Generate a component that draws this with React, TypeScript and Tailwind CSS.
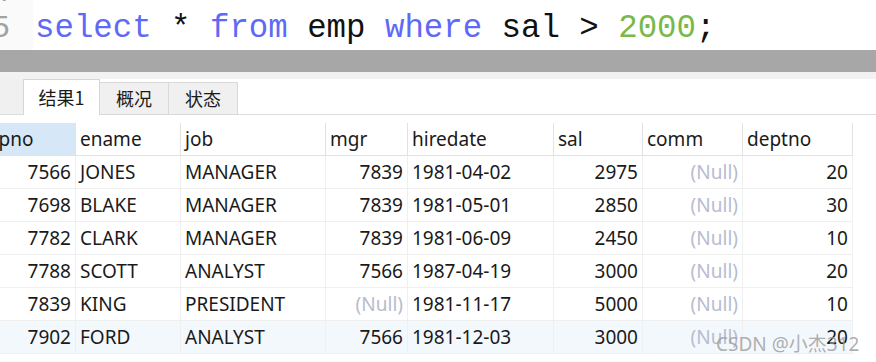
import React from 'react'

// Query result view: SQL editor line on top, result tabs, data grid below

type Align = 'l' | 'r'

const columns: { name: string; align: Align }[] = [
  { name: 'empno', align: 'r' },
  { name: 'ename', align: 'l' },
  { name: 'job', align: 'l' },
  { name: 'mgr', align: 'r' },
  { name: 'hiredate', align: 'l' },
  { name: 'sal', align: 'r' },
  { name: 'comm', align: 'r' },
  { name: 'deptno', align: 'r' },
]

const rows: (string | null)[][] = [
  ['7566', 'JONES', 'MANAGER', '7839', '1981-04-02', '2975', null, '20'],
  ['7698', 'BLAKE', 'MANAGER', '7839', '1981-05-01', '2850', null, '30'],
  ['7782', 'CLARK', 'MANAGER', '7839', '1981-06-09', '2450', null, '10'],
  ['7788', 'SCOTT', 'ANALYST', '7566', '1987-04-19', '3000', null, '20'],
  ['7839', 'KING', 'PRESIDENT', null, '1981-11-17', '5000', null, '10'],
  ['7902', 'FORD', 'ANALYST', '7566', '1981-12-03', '3000', null, '20'],
]

const mono = { fontFamily: '"Liberation Mono", "Courier New", monospace' }
const ui = { fontFamily: '"Noto Sans", "Noto Sans CJK SC", sans-serif' }

export default function App() {
  return (
    <div className="relative w-[876px] h-[362px] overflow-hidden bg-white flex flex-col" style={ui}>
      {/* Editor */}
      <div className="h-[50px] flex overflow-hidden shrink-0">
        <div className="w-[33px] bg-[#fafafa] shrink-0 overflow-hidden">
          <div className="-mt-[25px] -ml-[9px] text-[32px] leading-[36px] text-[#a3a3a3]" style={mono}>
            <div>4</div>
            <div>5</div>
          </div>
        </div>
        <div className="-mt-[25px] pl-[2px] text-[32.4px] leading-[36px] whitespace-pre text-[#111]" style={mono}>
          <div>&nbsp;</div>
          <div>
            <span className="text-[#5e6af5]">select</span> * <span className="text-[#5e6af5]">from</span> emp{' '}
            <span className="text-[#5e6af5]">where</span> sal &gt; <span className="text-[#78b94a]">2000</span>;
          </div>
        </div>
      </div>

      {/* Splitter */}
      <div className="h-[22px] bg-[#a7a7a7] shrink-0" />

      {/* Tabs */}
      <div className="h-[7px] bg-[#f2f2f2] shrink-0" />
      <div className="flex h-[36px] shrink-0 text-[18px] text-[#1a1a1a]" style={{ fontFamily: '"Noto Sans CJK SC", sans-serif' }}>
        <div className="w-[23px] bg-[#f0f0f0] border-b border-[#dcdcdc]" />
        <div className="w-[77px] bg-white border-t border-l border-r border-[#d6d6d6] flex items-center justify-center">
          结果1
        </div>
        <div className="flex flex-col w-[69px]">
          <div className="h-[3px] bg-white" />
          <div className="flex-1 bg-[#f0f0f0] border-r border-t border-b border-[#d9d9d9] flex items-center justify-center">
            概况
          </div>
        </div>
        <div className="flex flex-col w-[69px]">
          <div className="h-[3px] bg-white" />
          <div className="flex-1 bg-[#f0f0f0] border-r border-t border-b border-[#d9d9d9] flex items-center justify-center">
            状态
          </div>
        </div>
        <div className="flex-1 border-b border-[#dcdcdc]" />
      </div>
      <div className="h-[8px] shrink-0" />

      {/* Result grid */}
      <div className="overflow-hidden">
        <div className="-ml-[30px] grid grid-cols-[106px_105px_145px_82px_146px_89px_100px_110px] text-[19px] text-[#1a1a1a]">
          {columns.map((c, i) => (
            <div
              key={c.name}
              className={`h-[33px] flex items-center border-r border-b border-[#e2e2e2] ${
                i === 0 ? 'bg-[#d6e7f7]' : 'bg-white px-[4px]'
              }`}
            >
              {c.name}
            </div>
          ))}
          {rows.map((r, ri) =>
            r.map((v, ci) => (
              <div
                key={`${ri}-${ci}`}
                className={`h-[33px] flex items-center px-[4px] border-r border-b border-[#efefef] ${
                  columns[ci].align === 'r' ? 'justify-end' : 'justify-start'
                } ${ri === rows.length - 1 ? 'bg-[#f3f8fd]' : 'bg-white'}`}
              >
                {v === null ? <span className="text-[#b7bccf]">(Null)</span> : v}
              </div>
            ))
          )}
        </div>
      </div>

      {/* Watermark */}
      <div className="absolute left-[716px] top-[330px] text-[19px] text-[#9b9b9b]/80 whitespace-nowrap">
        CSDN @小杰312
      </div>
    </div>
  )
}
